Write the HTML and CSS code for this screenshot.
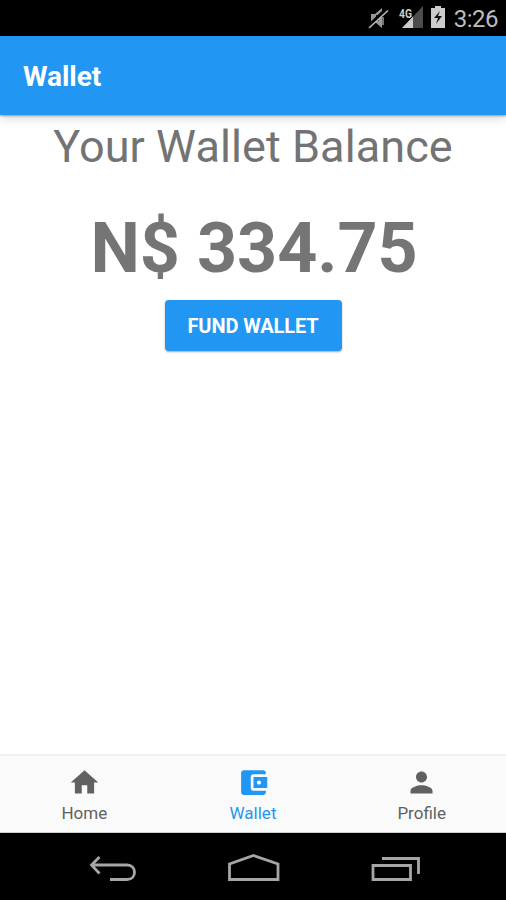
FILE: index.html
```html
<!DOCTYPE html>
<html lang="en">
<head>
<meta charset="utf-8">
<title>Wallet</title>
<link rel="stylesheet" href="styles.css">
</head>
<body>
<div class="screen">
  <div class="status">
    <svg class="status-icons" width="80" height="36" viewBox="368 0 80 36" aria-hidden="true">
      <path d="M372 14h4l7-6v20l-7-6h-4z" fill="#999"/>
      <path d="M377 15h3v6h-3z" fill="#222"/>
      <path d="M369 27L388 9" stroke="#000" stroke-width="4"/>
      <path d="M370 28L389 10.500" stroke="#bbb" stroke-width="1.6"/>
      <path d="M384 17v8" stroke="#999" stroke-width="1.5"/>
      <path d="M424 6v22h-21z" fill="#4c4c4c"/>
      <path d="M414 16.500v11.500h-11z" fill="#ccc"/>
      <rect x="398" y="6" width="15" height="12" fill="#000"/>
      <text class="network" x="400" y="18" textLength="13" lengthAdjust="spacingAndGlyphs">4G</text>
      <path d="M432 8h4V6h6v2h4v20h-14z" fill="#ccc"/>
      <path d="M441 11l-6 7h4l-2 6 6-8h-4z" fill="#111"/>
    </svg>
    <span class="clock">3:26</span>
  </div>
  <header class="bar">Wallet</header>
  <main class="content">
    <h1 class="title">Your Wallet Balance</h1>
    <p class="amount">N$ 334.75</p>
    <button class="fund">FUND WALLET</button>
  </main>
  <nav class="tabs">
    <a class="tab"><svg class="icon" viewBox="0 0 24 24"><path d="M10 20v-6h4v6h5v-8h3L12 3 2 12h3v8z"/></svg><span class="label">Home</span></a>
    <a class="tab active"><svg class="icon" viewBox="0 0 24 24"><path d="M21 18v1c0 1.100-.9 2-2 2H5c-1.110 0-2-.9-2-2V5c0-1.100.89-2 2-2h14c1.100 0 2 .9 2 2v1h-9c-1.110 0-2 .9-2 2v8c0 1.100.89 2 2 2h9zm-9-2h10V8H12v8zm4-2.500c-.83 0-1.500-.67-1.500-1.500s.67-1.500 1.500-1.500 1.500.67 1.500 1.500-.67 1.500-1.500 1.500z"/></svg><span class="label">Wallet</span></a>
    <a class="tab"><svg class="icon" viewBox="0 0 24 24"><path d="M12 12c2.210 0 4-1.790 4-4s-1.790-4-4-4-4 1.790-4 4 1.790 4 4 4zm0 2c-2.670 0-8 1.340-8 4v2h16v-2c0-2.660-5.330-4-8-4z"/></svg><span class="label">Profile</span></a>
  </nav>
  <div class="system">
    <svg width="506" height="67" viewBox="0 833 506 67" fill="none" stroke="#a6a6a6" stroke-width="2.800" aria-hidden="true">
      <path d="M92 865h35c10 0 10 14.500 0 14.500h-17M99.500 857l-8 8 8 8.500"/>
      <path d="M229.500 879.500V864l24-8.500 24.500 8.500v15.500z"/>
      <path d="M373 865.500h37.500v14H373zM382 858.500h36.500V874"/>
    </svg>
  </div>
</div>
</body>
</html>
```
FILE: styles.css
```css
* { box-sizing: border-box; }
body { margin: 0; font-family: Roboto, "Liberation Sans", sans-serif; }
.screen { width: 506px; height: 900px; display: flex; flex-direction: column; background: #fff; overflow: hidden; }
.status { height: 36px; flex: none; background: #000; display: flex; align-items: center; justify-content: flex-end; padding-right: 8px; }
.status-icons { margin-right: 7px; }
.network { font-size: 12px; font-weight: 700; fill: #ccc; }
.clock { font-size: 24px; line-height: 36px; padding-top: 2px; color: #bdbdbd; letter-spacing: -0.5px; }
.bar { height: 79px; flex: none; padding: 2px 0 0 23px; display: flex; align-items: center; background: #2196f3; color: #fff; font-size: 28px; font-weight: 700; letter-spacing: -0.05px; box-shadow: 0 1px 2px rgba(0,0,0,.35), 0 4px 9px rgba(60,20,20,.15); position: relative; }
.content { flex: 1; display: flex; flex-direction: column; align-items: center; }
.title { margin: 5px 0 0; font-size: 45px; line-height: 54px; letter-spacing: 0.08px; font-weight: 400; color: #737373; white-space: nowrap; }
.amount { margin: 32px 0 0 2px; font-size: 70px; line-height: 84px; letter-spacing: -0.1px; font-weight: 700; color: #757575; white-space: nowrap; }
.fund { margin: 10px 0 0; width: 177px; height: 51px; border: 0; border-radius: 4px; background: #2196f3; color: #fff; font: 700 20px Roboto, "Liberation Sans", sans-serif; letter-spacing: -0.1px; box-shadow: 0 1px 2px rgba(0,0,0,.35); padding: 1px 0 0; white-space: nowrap; }
.tabs { height: 79px; flex: none; display: flex; background: #fafafa; border-top: 2px solid #f0f0f0; border-bottom: 1px solid #ccc; }
.tab { flex: 1; display: flex; flex-direction: column; align-items: center; padding-top: 10px; color: #616161; }
.active { color: #2196f3; }
.icon { width: 33px; height: 33px; fill: currentColor; }
.label { font-size: 17px; line-height: 20px; margin-top: 4px; }
.system { height: 67px; flex: none; background: #000; }
.system svg { display: block; }
```
